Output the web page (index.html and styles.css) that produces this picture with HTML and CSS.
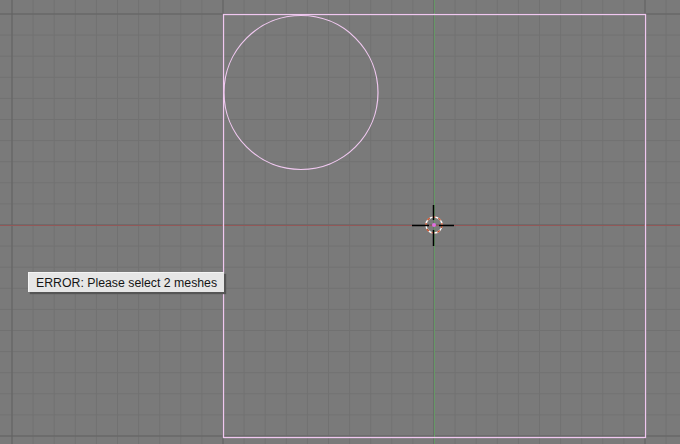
FILE: index.html
```html
<!DOCTYPE html>
<html>
<head>
<meta charset="utf-8">
<link rel="stylesheet" href="styles.css">
</head>
<body>
<div class="viewport">
  <svg class="scene" width="680" height="444" viewBox="0 0 680 444" xmlns="http://www.w3.org/2000/svg">
    <defs>
      <pattern id="minor" patternUnits="userSpaceOnUse" x="11.5" y="13.5" width="21.1" height="21.1">
        <rect x="0" y="0" width="1" height="21.1" fill="#717171"/>
        <rect x="0" y="0" width="21.1" height="1" fill="#717171"/>
      </pattern>
      <pattern id="major" patternUnits="userSpaceOnUse" x="11.5" y="13.5" width="211" height="211">
        <rect x="0" y="0" width="1" height="211" fill="#626262"/>
        <rect x="0" y="0" width="211" height="1" fill="#626262"/>
      </pattern>
    </defs>
    <rect width="680" height="444" fill="#7a7a7a"/>
    <rect width="680" height="444" fill="url(#minor)"/>
    <rect width="680" height="444" fill="url(#major)"/>
    <line x1="0" y1="225.5" x2="680" y2="225.5" stroke="#925858" stroke-width="1"/>
    <line x1="434.5" y1="0" x2="434.5" y2="444" stroke="#669866" stroke-width="1"/>
    <rect x="223.5" y="14.5" width="422" height="423" fill="none" stroke="#f0c8f0" stroke-width="1.3"/>
    <circle cx="301" cy="92.5" r="77" fill="none" stroke="#f0c8f0" stroke-width="1.2"/>
    <g class="cursor">
      <circle cx="434" cy="225" r="8" fill="none" stroke="#ffffff" stroke-width="1.4"/>
      <circle cx="434" cy="225" r="8" fill="none" stroke="#c8502a" stroke-width="1.4" stroke-dasharray="3 3"/>
      <line x1="412" y1="225.5" x2="429" y2="225.5" stroke="#000" stroke-width="1.5"/>
      <line x1="439" y1="225.5" x2="454" y2="225.5" stroke="#000" stroke-width="1.5"/>
      <line x1="433.5" y1="205" x2="433.5" y2="220" stroke="#000" stroke-width="1.5"/>
      <line x1="433.5" y1="230" x2="433.5" y2="246" stroke="#000" stroke-width="1.5"/>
      <circle cx="434" cy="225" r="2" fill="#e070e0"/>
    </g>
  </svg>
  <div class="tooltip">ERROR: Please select 2 meshes</div>
</div>
</body>
</html>
```
FILE: styles.css
```css
html, body {
  margin: 0;
  padding: 0;
  background: #7a7a7a;
}
.viewport {
  position: relative;
  width: 680px;
  height: 444px;
  overflow: hidden;
}
.scene {
  display: block;
}
.tooltip {
  position: absolute;
  left: 28px;
  top: 272px;
  width: 196px;
  height: 20px;
  padding-left: 7px;
  background: #e6e6e6;
  border-top: 1px solid #f4f4f4;
  border-left: 1px solid #f4f4f4;
  box-shadow: 2px 2px 1px #555555;
  font-family: "Liberation Sans", Arial, sans-serif;
  font-size: 12.3px;
  line-height: 20px;
  color: #151515;
  box-sizing: border-box;
  white-space: nowrap;
}
```
